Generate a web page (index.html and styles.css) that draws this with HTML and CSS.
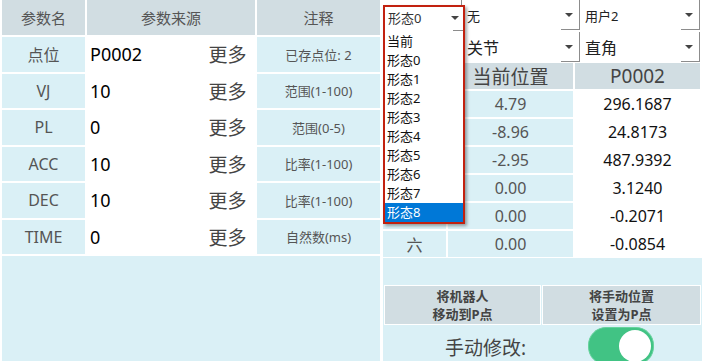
FILE: index.html
```html
<!DOCTYPE html>
<html lang="zh-CN">
<head>
    <meta charset="UTF-8">
    <title>点位编辑</title>
    <link rel="stylesheet" href="styles.css">
</head>
<body>
    <div class="screen">
        <div class="params">
            <div class="ptable">
                <div class="th">参数名</div>
                <div class="th span2">参数来源</div>
                <div class="th">注释</div>

                <div class="name">点位</div>
                <div class="val">P0002</div>
                <div class="more">更多</div>
                <div class="note">已存点位: 2</div>

                <div class="name">VJ</div>
                <div class="val">10</div>
                <div class="more">更多</div>
                <div class="note">范围(1-100)</div>

                <div class="name">PL</div>
                <div class="val">0</div>
                <div class="more">更多</div>
                <div class="note">范围(0-5)</div>

                <div class="name">ACC</div>
                <div class="val">10</div>
                <div class="more">更多</div>
                <div class="note">比率(1-100)</div>

                <div class="name">DEC</div>
                <div class="val">10</div>
                <div class="more">更多</div>
                <div class="note">比率(1-100)</div>

                <div class="name">TIME</div>
                <div class="val">0</div>
                <div class="more">更多</div>
                <div class="note">自然数(ms)</div>
            </div>
            <div class="pfill"></div>
        </div>

        <div class="pose">
            <div class="selects">
                <div class="combo">形态0</div>
                <div class="combo">无</div>
                <div class="combo">用户2</div>
                <div class="combo big"></div>
                <div class="combo big">关节</div>
                <div class="combo big">直角</div>
            </div>

            <div class="ctable">
                <div class="ch"></div>
                <div class="ch">当前位置</div>
                <div class="ch">P0002</div>

                <div class="axis">一</div><div class="cur">4.79</div><div class="tgt">296.1687</div>
                <div class="axis">二</div><div class="cur">-8.96</div><div class="tgt">24.8173</div>
                <div class="axis">三</div><div class="cur">-2.95</div><div class="tgt">487.9392</div>
                <div class="axis">四</div><div class="cur">0.00</div><div class="tgt">3.1240</div>
                <div class="axis">五</div><div class="cur">0.00</div><div class="tgt">-0.2071</div>
                <div class="axis">六</div><div class="cur">0.00</div><div class="tgt">-0.0854</div>
            </div>

            <div class="lower">
                <div class="actions">
                    <button class="act">将机器人<br>移动到P点</button>
                    <button class="act">将手动位置<br>设置为P点</button>
                </div>
                <div class="manual">
                    <span class="manual-label">手动修改:</span>
                    <div class="switch"><i class="knob"></i></div>
                </div>
            </div>

            <!-- open dropdown of the first combo -->
            <div class="droplist">
                <div class="dd-head">形态0</div>
                <div class="dd-item">当前</div>
                <div class="dd-item">形态0</div>
                <div class="dd-item">形态1</div>
                <div class="dd-item">形态2</div>
                <div class="dd-item">形态3</div>
                <div class="dd-item">形态4</div>
                <div class="dd-item">形态5</div>
                <div class="dd-item">形态6</div>
                <div class="dd-item">形态7</div>
                <div class="dd-item on">形态8</div>
            </div>
        </div>
    </div>
</body>
</html>
```

FILE: styles.css
```css
body {
    margin: 0;
    font-family: "Noto Sans", "Noto Sans CJK SC", sans-serif;
    background: #fff;
}
.screen {
    display: flex;
    width: 702px;
    height: 361px;
    overflow: hidden;
}

/* left: parameter table */
.params {
    width: 382px;
    box-sizing: border-box;
    padding: 0 2px;
    display: flex;
    flex-direction: column;
    gap: 2px;
}
.ptable {
    display: grid;
    grid-template-columns: 83px 111px 55px 123px;
    grid-template-rows: 35px repeat(6, 34.5px);
    gap: 2px;
}
.ptable > div {
    display: flex;
    align-items: center;
    justify-content: center;
}
.th {
    background: #d1dde2;
    color: #555;
    font-size: 15px;
}
.span2 {
    grid-column: span 2;
}
.name {
    background: #daf0f6;
    color: #555;
    font-size: 16px;
}
.ptable > .val {
    background: #fff;
    color: #000;
    font-size: 18px;
    justify-content: flex-start;
    padding-left: 3px;
}
.more {
    background: #fff;
    color: #444;
    font-size: 19px;
}
.note {
    background: #daf0f6;
    color: #555;
    font-size: 13px;
}
.pfill {
    flex: 1;
    background: #daf0f6;
}

/* right: pose panel */
.pose {
    width: 320px;
    position: relative;
    display: flex;
    flex-direction: column;
}
.selects {
    display: grid;
    grid-template-columns: 80px 116px 118px;
    grid-template-rows: 30px 30px;
    gap: 2px;
    padding-right: 2px;
}
.combo {
    position: relative;
    background: #fff;
    border-right: 1px solid #8c8c8c;
    color: #222;
    font-size: 13px;
    padding-left: 3px;
    display: flex;
    align-items: center;
}
.combo.big {
    font-size: 16px;
}
.combo::after {
    content: "";
    position: absolute;
    right: 6px;
    top: 13px;
    border-left: 4px solid transparent;
    border-right: 4px solid transparent;
    border-top: 4px solid #444;
}
.combo::before {
    content: "";
    position: absolute;
    right: 0;
    bottom: 0;
    width: 18px;
    height: 1px;
    background: #8c8c8c;
}
.ctable {
    margin-top: 1px;
    padding: 0 2px 0 1px;
    display: grid;
    grid-template-columns: 63px 125px 125px;
    grid-template-rows: repeat(7, 26px);
    gap: 2px;
}
.ctable > div {
    display: flex;
    align-items: center;
    justify-content: center;
}
.ch {
    background: #d1dde2;
    color: #444;
    font-size: 19px;
}
.axis {
    background: #daf0f6;
    color: #555;
    font-size: 16px;
}
.cur {
    background: #daf0f6;
    color: #555;
    font-size: 16px;
}
.tgt {
    background: #fff;
    color: #111;
    font-size: 16px;
}
.lower {
    flex: 1;
    margin: 1px 0 0 1px;
    background: #daf0f6;
    padding-top: 27px;
    display: flex;
    flex-direction: column;
}
.actions {
    display: grid;
    grid-template-columns: 157px 1fr;
    gap: 1px;
    padding: 0 1px 0 1px;
    height: 40px;
}
.act {
    background: #d1dde2;
    border: 1px solid #fff;
    color: #444;
    font-family: inherit;
    font-size: 13px;
    font-weight: bold;
    line-height: 18px;
    padding: 0;
}
.manual {
    display: flex;
    align-items: flex-start;
    padding: 2px 0 0 62px;
}
.manual-label {
    font-size: 19px;
    color: #444;
    margin-top: 6px;
    width: 143px;
}
.switch {
    position: relative;
    width: 64px;
    height: 36px;
    border-radius: 18px;
    background: #41c384;
    border: 1px solid #66d39d;
}
.knob {
    position: absolute;
    right: 2px;
    top: 2px;
    width: 32px;
    height: 32px;
    border-radius: 50%;
    background: #fff;
}

/* open combo dropdown */
.droplist {
    position: absolute;
    left: 1px;
    top: 5px;
    width: 78px;
    border: 2px solid #c2210f;
    background: #fff;
    box-shadow: 2px 2px 3px rgba(0, 0, 0, 0.35);
}
.dd-head {
    position: relative;
    height: 25px;
    line-height: 22px;
    font-size: 13px;
    color: #333;
    padding-left: 3px;
}
.dd-head::after {
    content: "";
    position: absolute;
    right: 4px;
    top: 9px;
    border-left: 4px solid transparent;
    border-right: 4px solid transparent;
    border-top: 4px solid #444;
}
.dd-head::before {
    content: "";
    position: absolute;
    right: 0;
    bottom: 1px;
    width: 10px;
    height: 1px;
    background: #8c8c8c;
}
.dd-item {
    height: 19px;
    line-height: 19px;
    font-size: 13px;
    color: #111;
    padding-left: 2px;
}
.dd-item.on {
    background: #0078d7;
    color: #fff;
}
```
